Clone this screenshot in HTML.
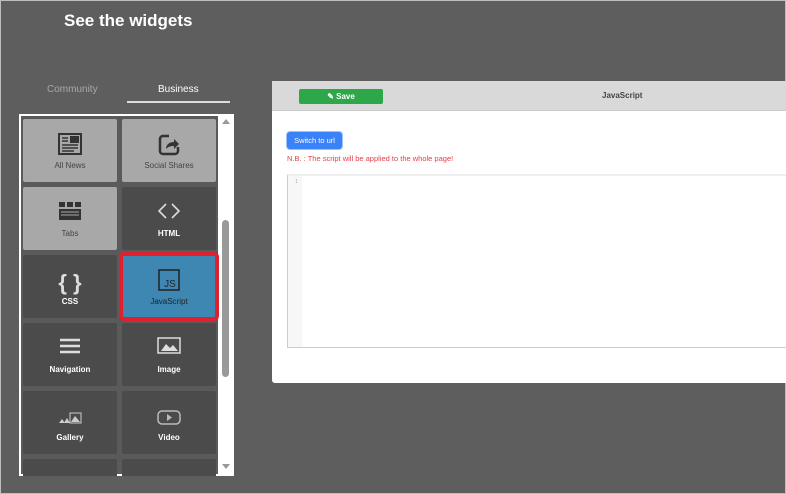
<!DOCTYPE html>
<html style="overflow:hidden;width:786px;height:494px"><head><style>
*{box-sizing:border-box;margin:0;padding:0}
body{width:786px;height:494px;background:#5e5e5e;font-family:"Liberation Sans",sans-serif;position:relative;overflow:hidden;border:1px solid #bdbdbd}
.abs{position:absolute}
h1{position:absolute;left:63px;top:10px;color:#fff;font-size:17px;font-weight:bold}
.tab{position:absolute;top:83px;font-size:10px}
.panel{position:absolute;left:18px;top:113px;width:215px;height:362px;background:#fff;overflow:hidden}
.grid{position:absolute;left:2px;top:2px;width:197px;height:358px;background:#5a5a5a}
.t{position:absolute;width:94px;height:63px;background:#4b4b4b;border-radius:2px;color:#fff;font-size:8px;font-weight:bold;text-align:center}
.t.l{background:#a8a8a8;color:#444;font-weight:normal}
.t span{position:absolute;left:0;right:0;bottom:12px}
.t svg{position:absolute;left:50%;top:14px;transform:translateX(-50%)}
</style></head><body>
<h1>See the widgets</h1>
<div class="tab" style="left:46px;color:#a8a8a8">Community</div>
<div class="tab" style="left:157px;color:#fff">Business</div>
<div class="abs" style="left:126px;top:100px;width:103px;height:2px;background:#ddd"></div>
<div class="panel">
 <div class="grid">
  <div class="t l" style="left:2px;top:3px"><svg width="24" height="22" viewBox="0 0 24 22"><rect x="1" y="1" width="22" height="20" fill="none" stroke="#333" stroke-width="2"/><rect x="12" y="3" width="9" height="7" fill="#333"/><path d="M4 5h6M4 8h6M4 12h16M4 15h16M4 18h12" stroke="#333" stroke-width="1.5"/></svg><span>All News</span></div>
  <div class="t l" style="left:101px;top:3px"><svg width="24" height="24" viewBox="0 0 24 24"><path d="M12 3H6a3 3 0 0 0-3 3v12a3 3 0 0 0 3 3h12a3 3 0 0 0 3-3v-4" fill="none" stroke="#333" stroke-width="2.5"/><path d="M9 16c0-5 4-7 8-7V6l5 5-5 5v-3c-4 0-6 1-8 3z" fill="#333"/></svg><span>Social Shares</span></div>
  <div class="t l" style="left:2px;top:71px"><svg width="24" height="20" viewBox="0 0 24 20"><rect x="1" y="1" width="6" height="5" fill="#333"/><rect x="9" y="1" width="6" height="5" fill="#333"/><rect x="17" y="1" width="6" height="5" fill="#333"/><rect x="1" y="8" width="22" height="11" fill="#333"/><path d="M3 11h18M3 14h18" stroke="#a8a8a8"/></svg><span>Tabs</span></div>
  <div class="t" style="left:101px;top:71px"><svg width="24" height="20" viewBox="0 0 24 20"><path d="M9 3 2 10l7 7M15 3l7 7-7 7" fill="none" stroke="#ddd" stroke-width="1.6"/></svg><span>HTML</span></div>
  <div class="t" style="left:2px;top:139px"><svg width="24" height="26" viewBox="0 0 24 26"><text x="12" y="21" font-size="22" fill="#ddd" text-anchor="middle" font-family="Liberation Sans">{ }</text></svg><span>CSS</span></div>
  <div class="t" style="left:101px;top:139px;background:#3f87b3;outline:4px solid #e0202c;outline-offset:-1px;color:#222;font-weight:normal"><svg width="22" height="22" viewBox="0 0 22 22"><rect x="1" y="1" width="20" height="20" fill="none" stroke="#222" stroke-width="1.5"/><text x="12" y="18" font-size="10" fill="#222" text-anchor="middle" font-family="Liberation Sans">JS</text></svg><span>JavaScript</span></div>
  <div class="t" style="left:2px;top:207px"><svg width="24" height="18" viewBox="0 0 24 18"><path d="M2 3h20M2 9h20M2 15h20" stroke="#ddd" stroke-width="2.5"/></svg><span>Navigation</span></div>
  <div class="t" style="left:101px;top:207px"><svg width="24" height="18" viewBox="0 0 24 18"><rect x="1" y="1" width="22" height="15" fill="none" stroke="#ddd" stroke-width="1.5"/><path d="M4 14l5-7 4 4 3-3 5 6z" fill="#ddd"/></svg><span>Image</span></div>
  <div class="t" style="left:2px;top:275px"><svg width="24" height="14" viewBox="0 0 24 14" style="top:20px"><rect x="12" y="2" width="11" height="10" fill="none" stroke="#ccc"/><path d="M13 11l4-6 5 6z M1 12l3-4 3 4zM6 12l3-5 3 5z" fill="#ccc"/></svg><span>Gallery</span></div>
  <div class="t" style="left:101px;top:275px"><svg width="24" height="16" viewBox="0 0 24 16" style="top:19px"><rect x="1" y="1" width="22" height="13" rx="4" fill="none" stroke="#bbb" stroke-width="1.5"/><path d="M10 4v7l5-3.5z" fill="#bbb"/></svg><span>Video</span></div>
  <div class="t" style="left:2px;top:343px"></div>
  <div class="t" style="left:101px;top:343px"></div>
 </div>
 <div class="abs" style="left:203px;top:5px;width:0;height:0;border-left:4px solid transparent;border-right:4px solid transparent;border-bottom:5px solid #999"></div>
 <div class="abs" style="left:203px;top:106px;width:7px;height:157px;background:#999;border-radius:4px"></div>
 <div class="abs" style="left:203px;top:350px;width:0;height:0;border-left:4px solid transparent;border-right:4px solid transparent;border-top:5px solid #999"></div>
</div>
<div class="abs" style="left:271px;top:80px;width:515px;height:302px;background:#fff;border-radius:3px 0 0 3px">
 <div class="abs" style="left:0;top:0;width:515px;height:30px;background:#d9d9d9;border-bottom:1px solid #ccc"></div>
 <div class="abs" style="left:27px;top:8px;width:84px;height:15px;background:#2ea64a;border-radius:2px;color:#fff;font-size:8px;font-weight:bold;text-align:center;line-height:15px">&#9998; Save</div>
 <div class="abs" style="left:330px;top:10px;font-size:8px;font-weight:bold;color:#444">JavaScript</div>
 <div class="abs" style="left:15px;top:51px;width:55px;height:17px;background:#3a82f7;border-radius:3px;color:#fff;font-size:7.5px;text-align:center;line-height:17px;box-shadow:0 0 0 1px #9cc3ff">Switch to url</div>
 <div class="abs" style="left:15px;top:73px;font-size:7.5px;color:#e0404a">N.B. : The script will be applied to the whole page!</div>
 <div class="abs" style="left:15px;top:93px;width:500px;height:174px;border:1px solid #ccc;border-right:none;border-top:2px solid #eee"></div>
 <div class="abs" style="left:16px;top:95px;width:14px;height:171px;background:#f7f7f7;font-size:5px;color:#aaa;text-align:right;padding:3px 4px 0 0">1</div>
</div>
</body></html>
